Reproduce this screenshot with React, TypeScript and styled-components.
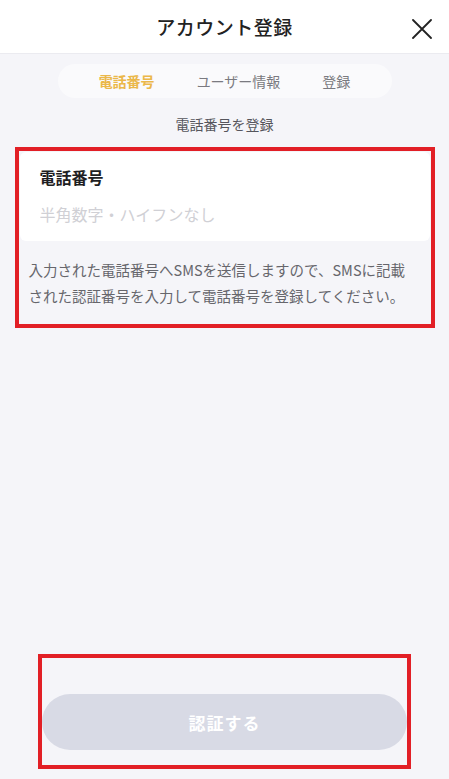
import styled, { createGlobalStyle } from 'styled-components'

const GlobalStyle = createGlobalStyle`
	html, body {
		margin: 0;
		padding: 0;
		background: #f5f5f9;
	}
	* {
		box-sizing: border-box;
	}
	body {
		font-family: 'Noto Sans CJK JP', 'Noto Sans', sans-serif;
	}
`

const steps = ['電話番号', 'ユーザー情報', '登録']

export default function App() {
	return (
		<Page>
			<GlobalStyle />
			<Header>
				<Title>アカウント登録</Title>
				<CloseButton aria-label="close">
					<svg width="20" height="20" viewBox="0 0 20 20">
						<path
							d="M1 1 L19 19 M19 1 L1 19"
							stroke="#222"
							strokeWidth="1.8"
							strokeLinecap="round"
						/>
					</svg>
				</CloseButton>
			</Header>

			<StepBar>
				{steps.map((step, i) => (
					<Step key={step} active={i === 0}>
						{step}
					</Step>
				))}
			</StepBar>

			<Subtitle>電話番号を登録</Subtitle>

			<Highlight>
				<InputCard>
					<FieldLabel>電話番号</FieldLabel>
					<PhoneInput placeholder="半角数字・ハイフンなし" />
				</InputCard>
				<Note>
					入力された電話番号へSMSを送信しますので、SMSに記載
					<br />
					された認証番号を入力して電話番号を登録してください。
				</Note>
			</Highlight>

			<Spacer />

			<ButtonHighlight>
				<SubmitButton disabled>認証する</SubmitButton>
			</ButtonHighlight>
		</Page>
	)
}

const Page = styled.div`
	min-height: 100vh;
	display: flex;
	flex-direction: column;
	align-items: center;
	background: #f5f5f9;
`

const Header = styled.header`
	width: 100%;
	height: 54px;
	background: #fff;
	border-bottom: 1px solid #ebebf0;
	display: flex;
	align-items: center;
	justify-content: center;
	position: relative;
`

const Title = styled.h1`
	margin: 0;
	font-size: 19px;
	font-weight: 500;
	color: #222;
	letter-spacing: 0.5px;
`

const CloseButton = styled.button`
	position: absolute;
	right: 16px;
	top: 18px;
	width: 22px;
	height: 22px;
	padding: 1px;
	border: none;
	background: none;
	display: flex;
	align-items: center;
	justify-content: center;
`

const StepBar = styled.nav`
	margin-top: 10px;
	width: 334px;
	height: 34px;
	border-radius: 17px;
	background: #fafafc;
	display: flex;
	align-items: center;
	justify-content: center;
	gap: 42px;
`

const Step = styled.span<{ active?: boolean }>`
	font-size: 14px;
	font-weight: ${(p) => (p.active ? 700 : 400)};
	color: ${(p) => (p.active ? '#ebb84a' : '#7a7a80')};
`

const Subtitle = styled.p`
	margin: 16px 0 0;
	font-size: 14px;
	line-height: 20px;
	color: #55555c;
`

const Highlight = styled.section`
	margin-top: 13px;
	width: 420px;
	border: 4px solid #e21f26;
	padding: 1px 1px 15px;
`

const InputCard = styled.div`
	background: #fff;
	border-radius: 6px;
	padding: 14px 20px 15px;
	display: flex;
	flex-direction: column;
	gap: 14px;
`

const FieldLabel = styled.label`
	font-size: 16px;
	font-weight: 700;
	line-height: 22px;
	color: #1e1e22;
`

const PhoneInput = styled.input`
	border: none;
	outline: none;
	padding: 0;
	font-family: inherit;
	font-size: 16px;
	line-height: 24px;
	color: #222;
	background: transparent;

	&::placeholder {
		color: #d0d0d5;
	}
`

const Note = styled.p`
	margin: 16px 0 0;
	padding-left: 9px;
	font-size: 14.5px;
	line-height: 26px;
	color: #66666c;
`

const Spacer = styled.div`
	flex: 1;
`

const ButtonHighlight = styled.div`
	margin-bottom: 10px;
	width: 373px;
	border: 4px solid #e21f26;
	padding: 36px 0 15px;
`

const SubmitButton = styled.button`
	width: 100%;
	height: 56px;
	border: none;
	border-radius: 28px;
	background: #d8dae5;
	color: #fff;
	font-family: inherit;
	font-size: 17px;
	font-weight: 700;
	letter-spacing: 1px;
`
